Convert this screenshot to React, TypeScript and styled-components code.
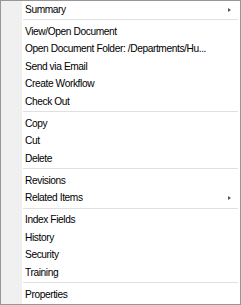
import styled, { createGlobalStyle } from "styled-components";

const GlobalStyle = createGlobalStyle`
  html, body {
    margin: 0;
    padding: 0;
    background: #ffffff;
  }
  * {
    box-sizing: border-box;
  }
`;

const Menu = styled.ul`
  margin: 0;
  padding: 0;
  list-style: none;
  width: 241px;
  height: 305px;
  display: flex;
  flex-direction: column;
  border: 1px solid #979797;
  background: linear-gradient(to right, #f0f0f0 0 21px, #ffffff 21px);
  font-family: "Liberation Sans", Arial, sans-serif;
  font-size: 10.2px;
  letter-spacing: -0.4px;
  color: #000000;
  overflow: hidden;
`;

const Item = styled.li`
  flex: none;
  height: 17.6px;
  display: flex;
  align-items: center;
  justify-content: space-between;
  padding: 0 9px 0 24px;
  white-space: nowrap;
  line-height: 16px;
`;

const Arrow = styled.span`
  width: 0;
  height: 0;
  border-top: 2.5px solid transparent;
  border-bottom: 2.5px solid transparent;
  border-left: 3px solid #555555;
`;

const Separator = styled.li`
  flex: none;
  height: 4.2px;
  margin: 0 2px 0 22px;
  padding-top: 0.6px;

  &::before {
    content: "";
    display: block;
    height: 1px;
    background: #e0e0e0;
  }
`;

type Entry = { label: string; sub?: boolean } | "sep";

const entries: Entry[] = [
  { label: "Summary", sub: true },
  "sep",
  { label: "View/Open Document" },
  { label: "Open Document Folder: /Departments/Hu..." },
  { label: "Send via Email" },
  { label: "Create Workflow" },
  { label: "Check Out" },
  "sep",
  { label: "Copy" },
  { label: "Cut" },
  { label: "Delete" },
  "sep",
  { label: "Revisions" },
  { label: "Related Items", sub: true },
  "sep",
  { label: "Index Fields" },
  { label: "History" },
  { label: "Security" },
  { label: "Training" },
  "sep",
  { label: "Properties" },
];

export default function App() {
  return (
    <>
      <GlobalStyle />
      <Menu>
        {entries.map((e, i) =>
          e === "sep" ? (
            <Separator key={i} />
          ) : (
            <Item key={i}>
              <span>{e.label}</span>
              {e.sub && <Arrow />}
            </Item>
          )
        )}
      </Menu>
    </>
  );
}
